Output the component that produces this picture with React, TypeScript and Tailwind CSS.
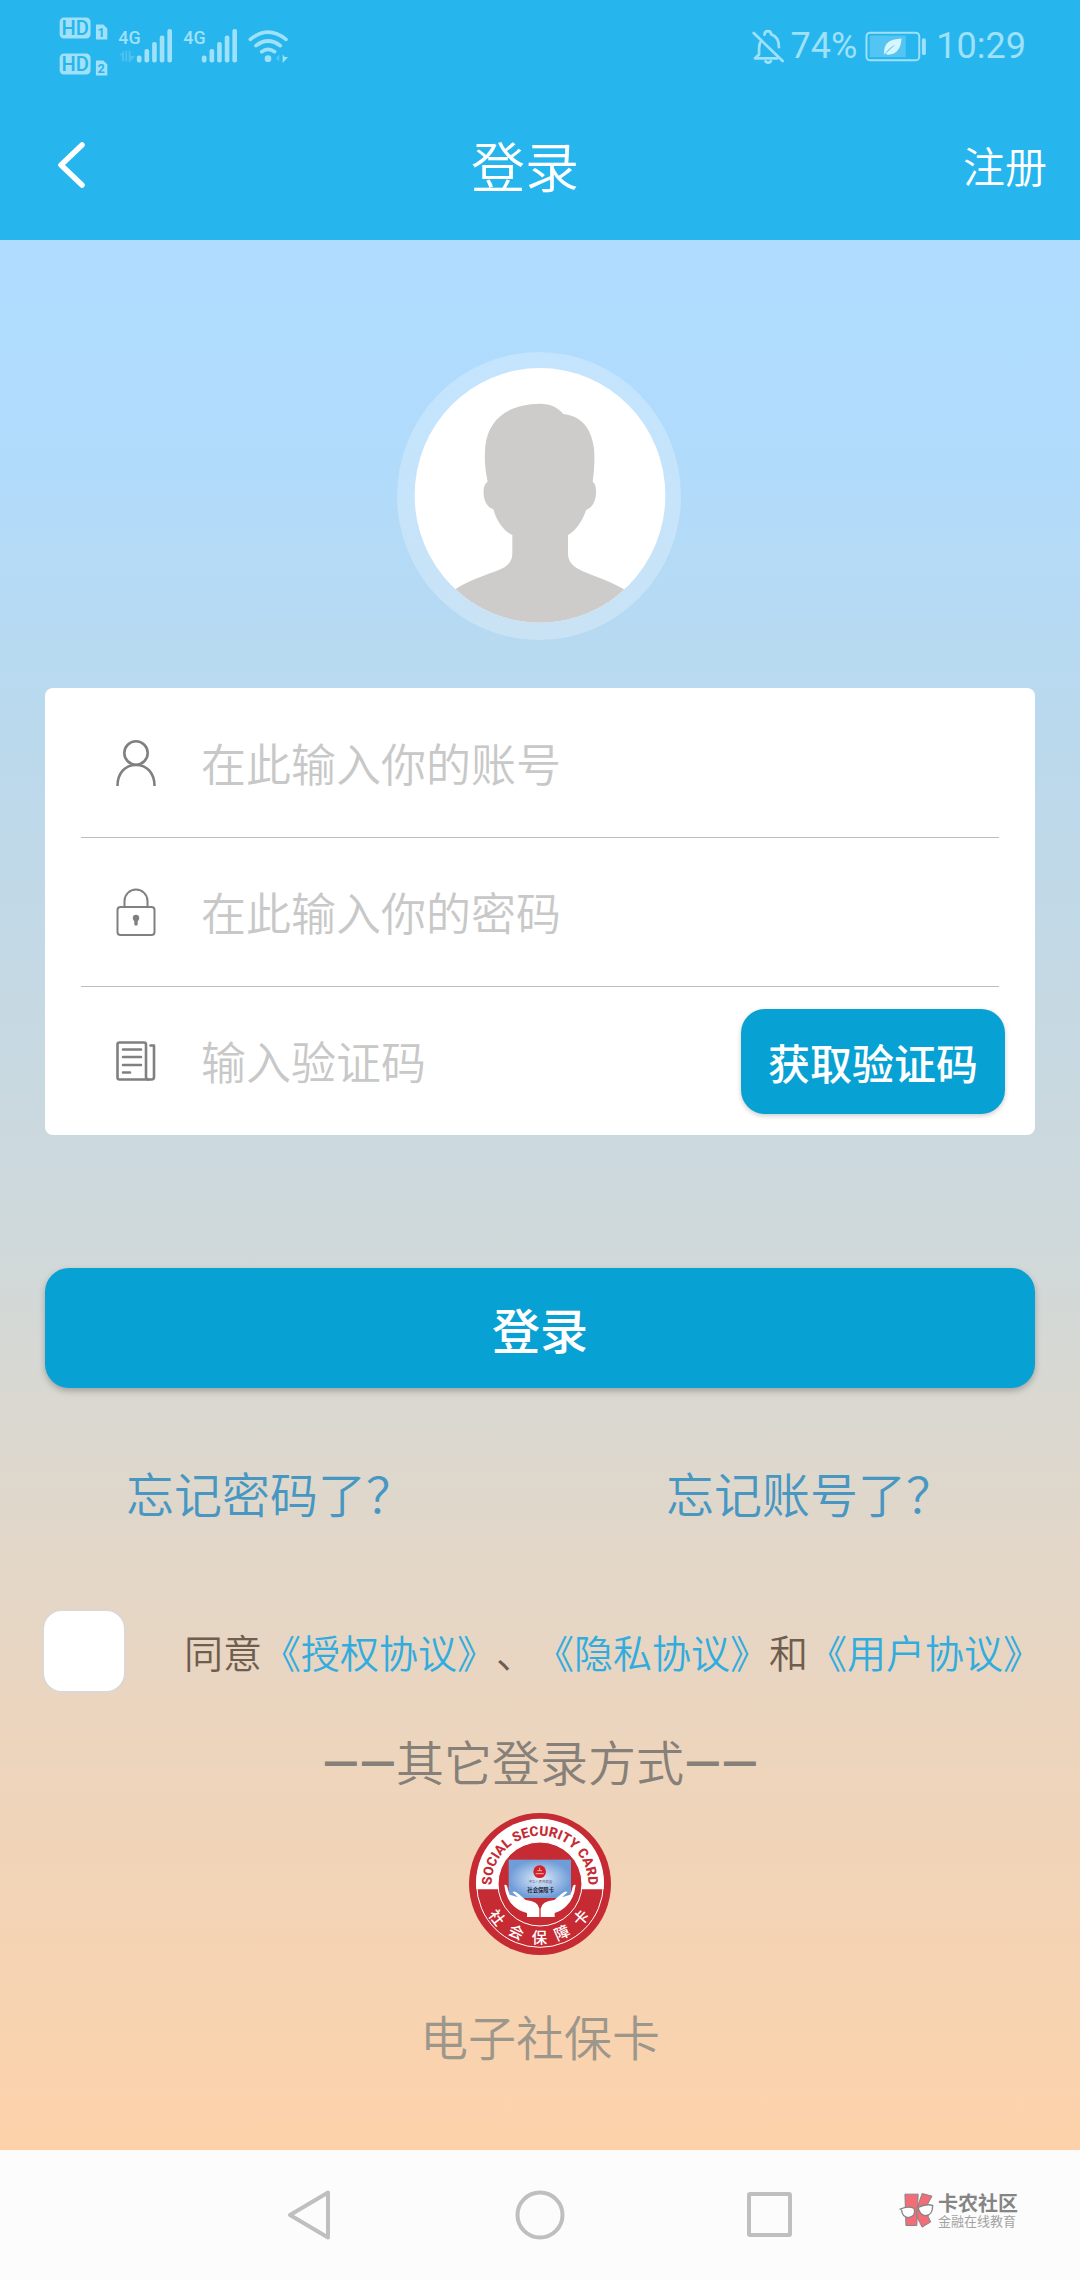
import React, { useState } from 'react';

function SignalBars({ arrows }: { arrows?: boolean }) {
  return (
    <svg viewBox="234 80 166 108" className="w-[55px] h-9" fill="#9ee1f9">
      <text x="235" y="128" fontFamily="Roboto, sans-serif" fontSize="54" fontWeight="500">4G</text>
      {arrows && (
        <path d="M238 162l14-14v32h-6v-18zM256 148h6v32h-6zM266 148h6v16h14l-16 18h-4z" opacity="0.3" />
      )}
      <rect x="291" y="163" width="14" height="21" rx="6" />
      <rect x="314" y="143" width="14" height="41" rx="6" />
      <rect x="337" y="122" width="14" height="62" rx="6" />
      <rect x="360" y="102" width="14" height="82" rx="6" />
      <rect x="383" y="83" width="14" height="101" rx="6" />
    </svg>
  );
}

function HdBadge({ sim }: { sim: number }) {
  return (
    <svg viewBox="58 50 146 68" className="w-[49px] h-[23px]">
      <rect x="60" y="51" width="92" height="63" rx="13" fill="#9ee1f9" />
      <text x="106" y="104" textAnchor="middle" fontFamily="Roboto, sans-serif" fontSize="60" fontWeight="500" fill="#27b5ee">HD</text>
      <path d="M168 72h22l12 12v33h-34z" fill="#9ee1f9" />
      <text x="184" y="109" textAnchor="middle" fontFamily="Roboto, sans-serif" fontSize="38" fontWeight="700" fill="#27b5ee">{sim}</text>
    </svg>
  );
}

function StatusBar() {
  return (
    <div className="h-[90px] pt-[2px] pl-[59px] pr-[54px] flex items-center justify-between text-[#9ee1f9]">
      <div className="flex items-center gap-[10px]">
        <div className="flex flex-col gap-[13px]">
          <HdBadge sim={1} />
          <HdBadge sim={2} />
        </div>
        <SignalBars arrows />
        <SignalBars />
        <svg viewBox="618 82 126 102" className="w-[42px] h-[34px]" fill="none" stroke="#9ee1f9" strokeWidth="11" strokeLinecap="round">
          <path d="M625 113Q678 70 732 113" />
          <path d="M642 132Q678 104 715 132" />
          <path d="M659 150Q678 136 698 150" />
          <circle cx="678" cy="171" r="10" fill="#9ee1f9" stroke="none" />
          <path d="M712 158v22l-10-10z" fill="#9ee1f9" fillOpacity="0.4" stroke="none" />
          <path d="M722 158v26l16-18h-10z" fill="#9ee1f9" stroke="none" />
        </svg>
      </div>
      <div className="flex items-center font-[Roboto,sans-serif] text-[36px] leading-[44px]">
        <svg viewBox="64 54 98 104" className="w-[33px] h-[35px]" fill="none" stroke="#9ee1f9" strokeWidth="8" strokeLinecap="round" strokeLinejoin="round">
          <path d="M69 66L155 149" />
          <path d="M91 89C86 96 85 103 85 112V130L73 141H139" />
          <path d="M101 71C102 57 120 57 121 70C137 75 144 88 144 108" />
          <path d="M104 150Q112 158 120 150" />
        </svg>
        <span className="ml-[6px]">74%</span>
        <svg viewBox="405 60 190 94" className="ml-2 w-[63px] h-[31px]">
          <rect x="409" y="65" width="160" height="84" rx="11" fill="none" stroke="#9ee1f9" strokeWidth="6" />
          <rect x="419" y="74" width="109" height="65" fill="#54c5f3" />
          <path d="M463 132C460 92 484 86 515 83C514 112 501 133 472 132L468 128Q484 112 497 101Q478 110 463 132z" fill="#d6f5ff" />
          <rect x="577" y="82" width="12" height="51" rx="5" fill="#9ee1f9" />
        </svg>
        <span className="ml-2">10:29</span>
      </div>
    </div>
  );
}

function Avatar() {
  return (
    <svg viewBox="49 36 861 864" className="mx-auto w-[287px] h-[288px]" role="img" aria-label="头像">
      <defs>
        <clipPath id="face">
          <ellipse cx="478" cy="466" rx="376" ry="382" />
        </clipPath>
      </defs>
      <ellipse cx="475" cy="468" rx="426" ry="432" fill="#fff" fillOpacity="0.26" />
      <ellipse cx="478" cy="466" rx="376" ry="382" fill="#fff" />
      <path
        clipPath="url(#face)"
        fill="#cdcccb"
        d="M321 425C312 385 311 350 314 318C322 240 380 192 478 191C510 191 532 203 548 222C600 228 632 262 640 325C643 365 640 395 636 425C646 432 648 450 645 470C641 492 630 505 617 509C604 545 585 572 562 585V640C562 668 578 680 606 694C650 712 700 728 740 755L740 860H215V755C250 728 300 710 345 694C378 682 395 668 395 640V585C370 574 348 545 338 508C322 503 312 488 309 466C308 445 310 432 321 425z"
      />
    </svg>
  );
}

function UserIcon() {
  return (
    <svg viewBox="0 0 40 46" className="w-10 h-[46px]" fill="none" stroke="#808080" strokeWidth="2.6">
      <circle cx="20" cy="13" r="11.7" />
      <path d="M1.500 46C1.500 33 9 25 20 25S38.500 33 38.500 46" />
    </svg>
  );
}

function LockIcon() {
  return (
    <svg viewBox="0 0 40 48" className="w-10 h-12" fill="none" stroke="#808080" strokeWidth="2">
      <path d="M8.500 19V13a11.500 11.500 0 0 1 23 0V19" />
      <rect x="1.500" y="19" width="37" height="28" rx="3" />
      <circle cx="20" cy="30" r="3.200" fill="#808080" stroke="none" />
      <path d="M20 30v6" strokeWidth="3.500" strokeLinecap="round" />
    </svg>
  );
}

function CodeIcon() {
  return (
    <svg viewBox="0 0 40 40" className="w-10 h-10" fill="none" stroke="#808080" strokeWidth="2.600" strokeLinecap="round" strokeLinejoin="round">
      <path d="M30 3.500V36q0 2.500 2.500 2.500H3.500q-2 0-2-2V3.500q0-2 2-2H28q2 0 2 2z" />
      <path d="M34.500 4.500H38V36q0 2.500-2.500 2.500H32" />
      <path d="M7 8.500H25M7 16H25M7 24H25M7 31.500H14" />
    </svg>
  );
}

function CardLogo() {
  return (
    <svg viewBox="56 68 426 426" className="w-[142px] h-[142px]">
      <defs>
        <path id="arc-top" d="M124 281A145 145 0 0 1 414 281" />
        <radialGradient id="card">
          <stop offset="0" stopColor="#e2ecfa" />
          <stop offset="1" stopColor="#6f9dd8" />
        </radialGradient>
      </defs>
      <circle cx="269" cy="281" r="213" fill="#c62a33" />
      <circle cx="269" cy="281" r="190" fill="none" stroke="#fff" strokeWidth="3" />
      <path d="M78 297A192 192 0 1 1 460 297z" fill="#fff" />
      <circle cx="269" cy="281" r="126" fill="#c62a33" stroke="#fff" strokeWidth="3" />
      <text fontFamily="Roboto, sans-serif" fontSize="41" fontWeight="800" fill="#c62a33" textAnchor="middle">
        <textPath href="#arc-top" startOffset="50%">SOCIAL SECURITY CARD</textPath>
      </text>
      <rect x="175" y="208" width="187" height="115" fill="url(#card)" />
      <circle cx="268" cy="244" r="19" fill="#d3202b" />
      <path d="M256 250h24M261 241h14M268 232v8" stroke="#f3b4a5" strokeWidth="3" />
      <text x="270" y="277" textAnchor="middle" fontSize="10" fill="#445" fontFamily="'Noto Sans CJK SC', sans-serif">中华人民共和国</text>
      <text x="271" y="305" textAnchor="middle" fontSize="16" fontWeight="700" fill="#223" fontFamily="'Noto Sans CJK SC', sans-serif">社会保障卡</text>
      <path d="M162 284Q170 280 173 298L178 313L203 321L187 306Q190 299 204 310L226 329Q264 333 267 355V380H230V368Q205 362 190 347Q167 327 162 284z" fill="#fff" />
      <path d="M376 284Q368 280 365 298L360 313L335 321L351 306Q348 299 334 310L312 329Q274 333 271 355V380H313V368Q334 362 348 347Q371 327 376 284z" fill="#fff" />
      <g fill="#fff" fontFamily="'Noto Sans CJK SC', sans-serif" fontSize="46" fontWeight="500" textAnchor="middle">
        <text transform="translate(140 382) rotate(52) translate(0 17)">社</text>
        <text transform="translate(198 425) rotate(26) translate(0 17)">会</text>
        <text transform="translate(267 440) translate(0 17)">保</text>
        <text transform="translate(335 427) rotate(-24) translate(0 17)">障</text>
        <text transform="translate(392 382) rotate(-48) translate(0 17)">卡</text>
      </g>
    </svg>
  );
}

function Watermark() {
  return (
    <div className="absolute right-[62px] top-[42px] flex items-center gap-1">
      <svg viewBox="118 126 106 108" className="w-[35px] h-9">
        <g fill="#f26d78" stroke="#858585" strokeWidth="3" strokeLinejoin="round">
          <path d="M136 132H176L172 227H139z" />
          <path d="M188 130L218 138L196 178L214 216L188 232L172 200V176z" />
        </g>
        <g fill="#fff" stroke="#858585" strokeWidth="4">
          <path d="M122 177Q145 167 164 175Q170 201 146 203Q127 200 126 180z" />
          <path d="M176 172Q200 160 220 166Q220 196 198 197Q180 195 176 172z" />
        </g>
      </svg>
      <div>
        <div className="text-[20px] leading-[22px] font-bold text-[#858585]">卡农社区</div>
        <div className="text-[13px] leading-[14px] text-[#a3a3a3]">金融在线教育</div>
      </div>
    </div>
  );
}

function NavBar() {
  return (
    <nav className="relative h-[130px] shrink-0 bg-[#fcfcfc] flex items-center justify-center gap-[180px]">
      <button type="button" aria-label="返回">
        <svg viewBox="0 0 50 50" className="w-[50px] h-[50px]" fill="none" stroke="#bfbfbf" strokeWidth="4" strokeLinejoin="round">
          <path d="M43 2.500V47.500L5 25z" />
        </svg>
      </button>
      <button type="button" aria-label="主页">
        <svg viewBox="0 0 50 50" className="w-[50px] h-[50px]" fill="none" stroke="#bfbfbf" strokeWidth="4">
          <circle cx="25" cy="25" r="22.500" />
        </svg>
      </button>
      <button type="button" aria-label="最近任务">
        <svg viewBox="0 0 50 50" className="w-[50px] h-[50px]" fill="none" stroke="#bfbfbf" strokeWidth="4" strokeLinejoin="round">
          <rect x="4" y="4" width="41" height="41" rx="1" />
        </svg>
      </button>
      <Watermark />
    </nav>
  );
}

const inputClass =
  'flex-1 min-w-0 bg-transparent outline-none text-[45px] leading-[60px] font-[350] text-gray-700 placeholder:text-[#c8c8c8]';

export default function App() {
  const [agreed, setAgreed] = useState(false);

  return (
    <div className="min-h-screen flex flex-col font-['Noto_Sans_CJK_SC',Roboto,sans-serif] [text-spacing-trim:space-all]" lang="zh-CN">
      <header className="bg-[#27b5ee] text-white">
        <StatusBar />
        <div className="h-[150px] flex items-center">
          <button type="button" aria-label="返回" className="w-[90px] pl-[57px]">
            <svg viewBox="0 0 28 46" className="w-7 h-[46px]" fill="none" stroke="#fff" strokeWidth="5.500" strokeLinecap="round" strokeLinejoin="round">
              <path d="M25 3L4 23L25 43" />
            </svg>
          </button>
          <h1 className="flex-1 text-center text-[54px] leading-[72px] font-[350]">登录</h1>
          <a href="#register" className="w-[120px] pr-[33px] text-right text-[42px] leading-[60px] whitespace-nowrap font-[350]">注册</a>
        </div>
      </header>

      <main className="flex-1 bg-[linear-gradient(180deg,#afdcff_0%,#b1dbfb_12%,#b9d9ee_24%,#cfd9db_52%,#dfd7cb_66%,#ecd5be_78%,#fdd2aa_100%)] pt-[112px] pb-[75px]">
        <Avatar />

        <form className="mt-12 px-[45px]" onSubmit={(e) => e.preventDefault()}>
          <div className="bg-white rounded-lg px-9">
            <div className="h-[150px] pl-[35px] flex items-center gap-[45px] border-b border-[#bdbdbd]">
              <label htmlFor="account" aria-label="账号"><UserIcon /></label>
              <input id="account" type="text" placeholder="在此输入你的账号" className={inputClass} />
            </div>
            <div className="h-[149px] pl-[35px] flex items-center gap-[45px] border-b border-[#bdbdbd]">
              <label htmlFor="password" aria-label="密码"><LockIcon /></label>
              <input id="password" type="password" placeholder="在此输入你的密码" className={inputClass} />
            </div>
            <div className="h-[148px] pl-[35px] -mr-[6px] flex items-center gap-[45px]">
              <label htmlFor="code" aria-label="验证码"><CodeIcon /></label>
              <input id="code" type="text" placeholder="输入验证码" className={inputClass} />
              <button type="button" className="w-[264px] h-[105px] shrink-0 rounded-3xl bg-[#08a1d3] text-white text-[42px] font-medium shadow-[0_2px_5px_rgba(0,0,0,0.2)]">
                获取验证码
              </button>
            </div>
          </div>
          <button type="submit" className="mt-[133px] w-full h-[120px] rounded-3xl bg-[#08a1d3] text-white text-[48px] font-medium shadow-[0_3px_6px_rgba(0,0,0,0.25)]">
            登录
          </button>
        </form>

        <div className="mt-[68px] grid grid-cols-2 text-center text-[48px] leading-[72px] font-[350] text-[#4797c2]">
          <a href="#forgot-password">忘记密码了？</a>
          <a href="#forgot-account">忘记账号了？</a>
        </div>

        <div className="mt-[81px] pl-[42px] flex items-center gap-[58px]">
          <input
            id="agree"
            type="checkbox"
            checked={agreed}
            onChange={(e) => setAgreed(e.target.checked)}
            className="appearance-none w-[84px] h-[84px] shrink-0 rounded-[20px] bg-white border-2 border-[#dcd7d2] checked:bg-[#08a1d3]"
          />
          <p className="text-[39px] leading-[60px] font-[350] whitespace-nowrap text-[#6f5d4e]">
            <label htmlFor="agree">同意</label>
            <a href="#authorize" className="text-[#31acdf]">《授权协议》</a>、
            <a href="#privacy" className="text-[#31acdf]">《隐私协议》</a>和
            <a href="#terms" className="text-[#31acdf]">《用户协议》</a>
          </p>
        </div>

        <h2 className="mt-[31px] h-[72px] text-center text-[48px] leading-[72px] font-[350] text-[#868079]">
          <span className="font-[Roboto,sans-serif] font-medium">——</span>其它登录方式<span className="font-[Roboto,sans-serif] font-medium">——</span>
        </h2>
        <a href="#social-card" className="mt-[17px] flex flex-col items-center gap-11 text-[48px] leading-[72px] font-[350] text-[#9d968b]">
          <CardLogo />
          电子社保卡
        </a>
      </main>

      <NavBar />
    </div>
  );
}
